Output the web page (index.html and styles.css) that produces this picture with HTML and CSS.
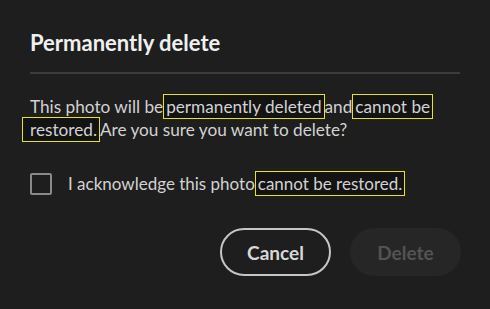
FILE: index.html
```html
<!DOCTYPE html>
<html>
<head>
<meta charset="utf-8">
<link rel="stylesheet" href="styles.css">
</head>
<body>
<div class="dialog">
  <h1 class="title">Permanently delete</h1>
  <div class="divider"></div>
  <p class="message">This photo will be<span class="hl">permanently deleted</span>and<span class="hl">cannot be</span> <span class="hl hl-first">restored.</span>Are you sure you want to delete?</p>
  <label class="check">
    <span class="box"></span>
    <span class="check-text">I acknowledge this photo<span class="hl">cannot be restored.</span></span>
  </label>
  <div class="actions">
    <button class="btn btn-cancel">Cancel</button>
    <button class="btn btn-delete" disabled>Delete</button>
  </div>
</div>
</body>
</html>
```
FILE: styles.css
```css
html, body {
  margin: 0;
  padding: 0;
  background: #1e1e1e;
}
body {
  width: 490px;
  height: 309px;
  overflow: hidden;
  font-family: Lato, "Open Sans", sans-serif;
  color: #d2d2d2;
}
.dialog {
  padding: 29px 29px 0 30px;
}
.title {
  margin: 0;
  font-size: 22px;
  line-height: 28px;
  font-weight: 700;
  color: #f0f0f0;
}
.divider {
  height: 2px;
  background: #3c3c3c;
  margin-top: 15px;
  margin-right: 1px;
}
.message {
  margin: 21px 0 0;
  font-size: 17.2px;
  line-height: 23px;
}
.hl {
  border: 1.5px solid #e4e41c;
  background: #131313;
  padding: 1px 2px;
}
.hl-first {
  margin-left: -8px;
  padding-left: 7px;
}
.check {
  display: flex;
  align-items: center;
  gap: 16px;
  margin-top: 31px;
  font-size: 17px;
  line-height: 24px;
}
.box {
  width: 18px;
  height: 18px;
  border: 2px solid #8a8a8a;
  border-radius: 2px;
  flex: none;
}
.actions {
  display: flex;
  justify-content: flex-end;
  gap: 19px;
  margin-top: 32px;
}
.btn {
  width: 111px;
  height: 48px;
  border-radius: 24px;
  font-family: inherit;
  font-size: 19px;
  font-weight: 700;
  padding: 0;
}
.btn-cancel {
  background: transparent;
  border: 2px solid #c6c6c6;
  color: #d8d8d8;
}
.btn-delete {
  background: #262626;
  border: none;
  color: #535353;
}
```
